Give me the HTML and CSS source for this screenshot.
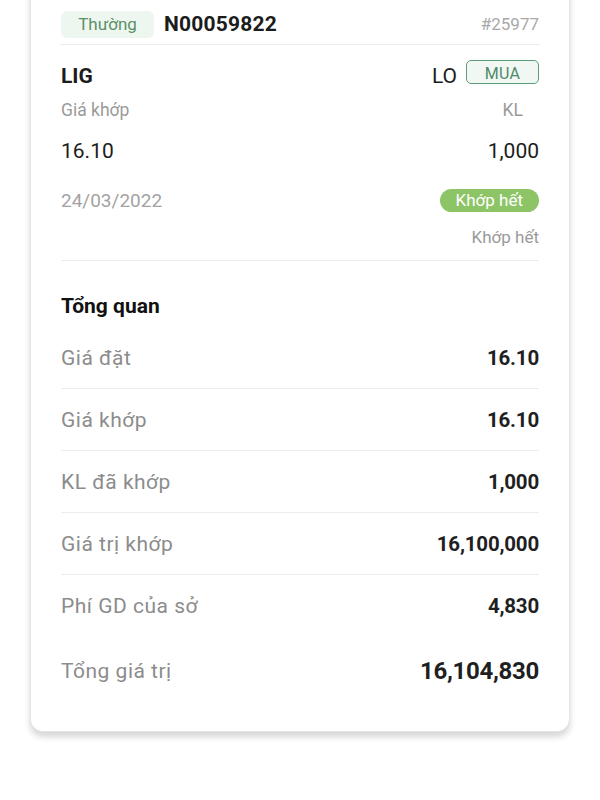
FILE: index.html
```html
<!DOCTYPE html>
<html lang="vi">
<head>
<meta charset="utf-8">
<link rel="stylesheet" href="styles.css">
</head>
<body>
<div class="card">
  <div class="head">
    <span class="tag">Thường</span>
    <span class="order-no">N00059822</span>
    <span class="hash">#25977</span>
  </div>
  <div class="detail">
    <div class="sym-row">
      <span class="sym">LIG</span>
      <span class="lo">LO</span>
      <span class="side">MUA</span>
    </div>
    <div class="sub-row">
      <span>Giá khớp</span>
      <span class="kl">KL</span>
    </div>
    <div class="val-row">
      <span>16.10</span>
      <span>1,000</span>
    </div>
    <div class="date-row">
      <span class="date">24/03/2022</span>
      <span class="pill">Khớp hết</span>
    </div>
    <div class="status">Khớp hết</div>
  </div>
  <div class="section-title">Tổng quan</div>
  <div class="sum-row"><span class="lbl">Giá đặt</span><span class="num">16.10</span></div>
  <div class="sum-row"><span class="lbl">Giá khớp</span><span class="num">16.10</span></div>
  <div class="sum-row"><span class="lbl">KL đã khớp</span><span class="num">1,000</span></div>
  <div class="sum-row"><span class="lbl">Giá trị khớp</span><span class="num">16,100,000</span></div>
  <div class="sum-row plain"><span class="lbl">Phí GD của sở</span><span class="num">4,830</span></div>
  <div class="sum-row plain total"><span class="lbl">Tổng giá trị</span><span class="num big">16,104,830</span></div>
</div>
</body>
</html>
```

FILE: styles.css
```css
* { box-sizing: border-box; }
html, body { margin: 0; padding: 0; background: #ffffff; }
body {
  font-family: Roboto, "Noto Sans", "Liberation Sans", sans-serif;
  color: #1c1c1c;
  width: 600px;
  height: 800px;
  overflow: hidden;
}
.card {
  margin: -20px 30px 0;
  padding: 31px 30px 26px;
  background: #fff;
  border: 1px solid #e4e4e4;
  border-top: none;
  border-radius: 0 0 13px 13px;
  box-shadow: 0 5px 6px rgba(0, 0, 0, 0.16);
}
.head {
  display: flex;
  align-items: center;
  height: 34px;
  padding-bottom: 7px;
  border-bottom: 1px solid #ececec;
  margin: 0 -1px;
  padding-left: 1px;
  padding-right: 1px;
}
.tag {
  display: inline-flex;
  align-items: center;
  justify-content: center;
  width: 93px;
  height: 27px;
  background: #eef6f0;
  color: #5b9068;
  border-radius: 6px;
  font-size: 17px;
}
.order-no {
  margin-left: 10px;
  font-weight: 700;
  font-size: 21px;
  letter-spacing: 0.2px;
}
.hash {
  margin-left: auto;
  color: #a8a8a8;
  font-size: 17px;
}
.detail {
  border-bottom: 1px solid #ececec;
  padding-bottom: 13px;
}
.sym-row {
  display: flex;
  align-items: center;
  height: 26px;
  margin-top: 18px;
}
.sym { font-weight: 700; font-size: 21px; }
.lo { margin-left: auto; font-size: 21px; margin-right: 9px; }
.side {
  align-self: flex-start;
  margin-top: -3px;
  width: 73px;
  height: 24px;
  border: 1.5px solid #5f9a7a;
  border-radius: 5px;
  background: #f1f8f4;
  color: #4f8a6a;
  font-size: 16px;
  display: flex;
  align-items: center;
  justify-content: center;
  padding-top: 2px;
  letter-spacing: 0.3px;
}
.sub-row {
  display: flex;
  justify-content: space-between;
  margin-top: 11px;
  line-height: 20px;
  font-size: 17.5px;
  color: #9a9a9a;
}
.kl { margin-right: 16px; }
.val-row {
  display: flex;
  justify-content: space-between;
  margin-top: 19px;
  line-height: 24px;
  font-size: 21px;
  color: #1c1c1c;
}
.date-row {
  display: flex;
  align-items: center;
  justify-content: space-between;
  margin-top: 25px;
  height: 24px;
}
.date { font-size: 19px; color: #a3a3a3; }
.pill {
  height: 23px;
  padding: 0 16px;
  border-radius: 12px;
  background: #8dc465;
  color: #fff;
  font-size: 17px;
  display: flex;
  align-items: center;
}
.status {
  margin-top: 15px;
  text-align: right;
  line-height: 20px;
  font-size: 17px;
  color: #9a9a9a;
}
.section-title {
  margin-top: 33px;
  margin-bottom: 9px;
  line-height: 24px;
  font-size: 21px;
  font-weight: 700;
  color: #111;
}
.sum-row {
  display: flex;
  align-items: center;
  justify-content: space-between;
  height: 62px;
  border-bottom: 1px solid #ececec;
}
.sum-row.plain { border-bottom-color: transparent; }
.sum-row.total { height: 68px; }
.lbl {
  font-size: 21px;
  color: #8c8c8c;
  letter-spacing: 0.5px;
}
.num {
  font-size: 20.5px;
  font-weight: 700;
  color: #1f1f1f;
  letter-spacing: -0.2px;
}
.num.big { font-size: 24px; letter-spacing: -0.3px; }
```
